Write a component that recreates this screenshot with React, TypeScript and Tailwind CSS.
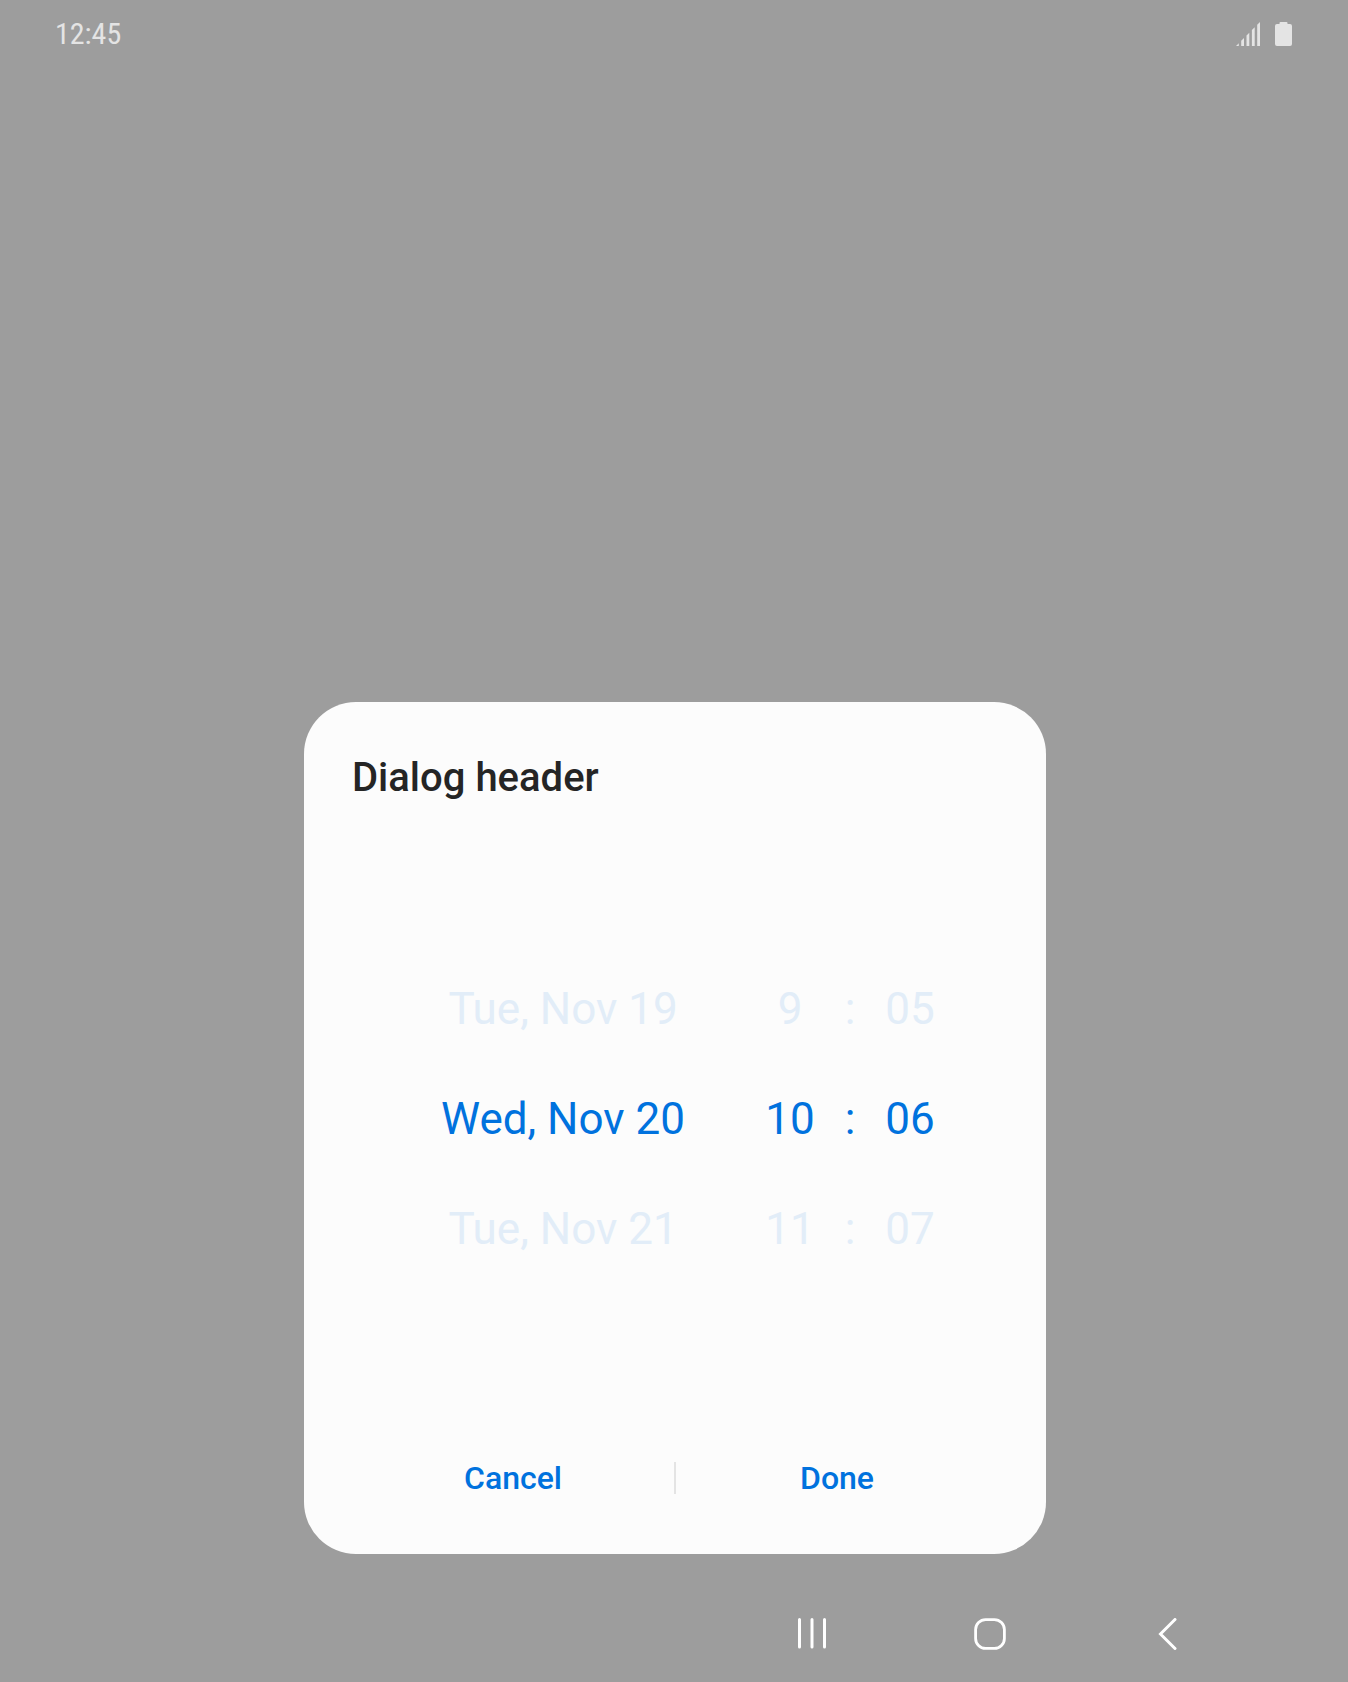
import { useState } from "react";

const dates = ["Tue, Nov 19", "Wed, Nov 20", "Tue, Nov 21"];
const hours = ["9", "10", "11"];
const minutes = ["05", "06", "07"];

function Wheel({ label, items, width }: { label: string; items: string[]; width: string }) {
  const [selected, setSelected] = useState(1);
  return (
    <div role="listbox" aria-label={label} className={`flex flex-col ${width}`}>
      {items.map((item, i) => (
        <button
          key={item}
          type="button"
          role="option"
          aria-selected={i === selected}
          onClick={() => setSelected(i)}
          className={`h-[110px] whitespace-nowrap text-center ${i === selected ? "text-[#0072de]" : "text-[#e2edf8]"}`}
        >
          {item}
        </button>
      ))}
    </div>
  );
}

function StatusBar() {
  return (
    <header className="flex h-[68px] items-center justify-between pr-14 pl-[55px] text-[#e4e4e4]">
      <time className="font-['Roboto_Condensed','Roboto',sans-serif] text-[30px] leading-9">12:45</time>
      <div className="flex items-center gap-[15px]">
        <svg width="24" height="24" viewBox="0 0 24 24" fill="currentColor" aria-label="Signal">
          <path d="M0 24L2.8 21.2V24ZM5.2 24V18.8L8 16V24ZM10.5 24V13.5L13.3 10.7V24ZM15.9 24V8.1L18.7 5.3V24ZM21.2 24V2.8L24 0V24Z" />
        </svg>
        <svg width="17" height="24" viewBox="0 0 17 24" fill="currentColor" aria-label="Battery">
          <path d="M5.5 0H11.5Q12.5 0 12.5 1V2H15Q17 2 17 4V22Q17 24 15 24H2Q0 24 0 22V4Q0 2 2 2H4.5V1Q4.5 0 5.5 0Z" />
        </svg>
      </div>
    </header>
  );
}

function NavBar() {
  const button = "flex h-8 w-[178px] items-center justify-center";
  return (
    <nav className="flex justify-end pt-16 pr-[91px] pb-8 text-white">
      <button type="button" aria-label="Recents" className={button}>
        <svg width="32" height="32" viewBox="0 0 32 32" fill="none" stroke="currentColor" strokeWidth="3" strokeLinecap="round">
          <path d="M3.5 1.5V29M16 1.5V29M28.5 1.5V29" />
        </svg>
      </button>
      <button type="button" aria-label="Home" className={button}>
        <svg width="32" height="32" viewBox="0 0 32 32" fill="none" stroke="currentColor" strokeWidth="2.8">
          <rect x="1.6" y="1.6" width="28.8" height="28.8" rx="10" />
        </svg>
      </button>
      <button type="button" aria-label="Back" className={button}>
        <svg width="32" height="32" viewBox="0 0 32 32" fill="none" stroke="currentColor" strokeWidth="3" strokeLinecap="round" strokeLinejoin="miter">
          <path d="M23 1.5L8.5 16L23 30.5" />
        </svg>
      </button>
    </nav>
  );
}

export default function App() {
  return (
    <div className="flex min-h-screen flex-col bg-[#9d9d9d] font-['Roboto',sans-serif]">
      <StatusBar />
      <main className="flex flex-1 items-end justify-center pl-0.5">
        <section role="dialog" aria-labelledby="dialog-title" className="w-full max-w-[742px] rounded-[52px] bg-[#fcfcfc] pt-[52px] pb-11">
          <h1 id="dialog-title" className="px-12 text-[40px] leading-[48px] font-medium text-[#252525]">
            Dialog header
          </h1>
          <div className="mt-[152px] flex pl-[134px] text-[44px]">
            <Wheel label="Date" items={dates} width="w-[250px]" />
            <div className="ml-[62px] flex">
              <Wheel label="Hour" items={hours} width="w-20" />
              <div aria-hidden="true" className="flex w-10 flex-col text-center leading-[110px]">
                <span className="text-[#e2edf8]">:</span>
                <span className="text-[#0072de]">:</span>
                <span className="text-[#e2edf8]">:</span>
              </div>
              <Wheel label="Minute" items={minutes} width="w-20" />
            </div>
          </div>
          <div className="mt-[162px] flex items-center px-12 text-[32px] font-medium text-[#0072de]">
            <button type="button" className="h-16 flex-1">Cancel</button>
            <span className="h-8 w-0.5 bg-[#e4e4e4]" />
            <button type="button" className="h-16 flex-1">Done</button>
          </div>
        </section>
      </main>
      <NavBar />
    </div>
  );
}
